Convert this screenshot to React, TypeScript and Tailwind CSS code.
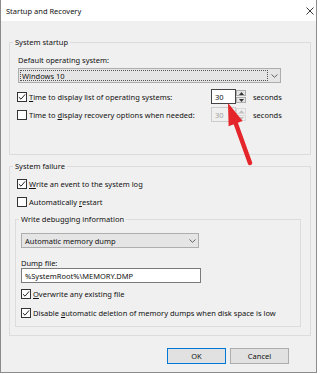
import React from 'react';

function Check({ checked }: { checked: boolean }) {
  return (
    <span className="w-[10px] h-[10px] shrink-0 border border-[#333] bg-white flex items-center justify-center">
      {checked && (
        <svg width="8" height="8" viewBox="0 0 8 8">
          <path d="M0.9 4.1 L3 6.2 L7.1 1.4" stroke="#222" strokeWidth="1" fill="none" />
        </svg>
      )}
    </span>
  );
}

function Chevron() {
  return (
    <svg width="7" height="4" viewBox="0 0 7 4" className="shrink-0">
      <path d="M0.5 0.5 L3.5 3.3 L6.5 0.5" stroke="#555" strokeWidth="0.9" fill="none" />
    </svg>
  );
}

function Spinner({ value, disabled }: { value: string; disabled?: boolean }) {
  return (
    <div className="flex h-[15px]">
      <div
        className={`w-[25px] h-full border pl-[3px] flex items-center ${
          disabled ? 'border-[#cccccc] bg-[#f0f0f0] text-[#a0a0a0]' : 'border-[#444] bg-white'
        }`}
      >
        {value}
      </div>
      <div className="w-[10px] h-full flex flex-col gap-[1px] py-[1px]">
        <div
          className={`flex-1 flex items-center justify-center border ${
            disabled ? 'border-[#d8d8d8]' : 'border-[#adadad] bg-[#e5e5e5]'
          }`}
        >
          <svg width="5" height="3" viewBox="0 0 5 3">
            <path d="M0 3 L2.5 0 L5 3 Z" fill={disabled ? '#c0c0c0' : '#333'} />
          </svg>
        </div>
        <div
          className={`flex-1 flex items-center justify-center border ${
            disabled ? 'border-[#d8d8d8]' : 'border-[#adadad] bg-[#e5e5e5]'
          }`}
        >
          <svg width="5" height="3" viewBox="0 0 5 3">
            <path d="M0 0 L2.5 3 L5 0 Z" fill={disabled ? '#c0c0c0' : '#333'} />
          </svg>
        </div>
      </div>
    </div>
  );
}

export default function App() {
  return (
    <div className="relative w-[320px] h-[374px] bg-white overflow-hidden font-['Noto_Sans',sans-serif] text-[7.5px] leading-[12px] text-[#111]">
      <div className="w-[317px] h-[373px] flex flex-col bg-[#f0f0f0] border-x border-b border-[#8c8c8c]">
        {/* Title bar */}
        <div className="h-[21px] shrink-0 bg-white flex items-center justify-between pl-[5px] pr-[2px]">
          <span>Startup and Recovery</span>
          <svg width="8" height="8" viewBox="0 0 8 8">
            <path d="M0.5 0.5 L7.5 7.5 M7.5 0.5 L0.5 7.5" stroke="#222" strokeWidth="0.9" />
          </svg>
        </div>

        {/* System startup */}
        <fieldset className="mt-[15px] ml-[8px] w-[302px] border border-[#dcdcdc]">
          <legend className="ml-[3px] px-[2px] leading-[12px]">System startup</legend>
          <div className="pl-[7px] pt-[6px] pb-[32px]">
            <div className="pl-[1px]">Default operating system:</div>
            <div className="ml-[1px] mt-[2px] w-[263px] h-[15px] border border-[#adadad] bg-[#e5e5e5] flex items-center pl-[1px]">
              <div className="flex-1 h-[11px] border border-dotted border-[#555] flex items-center pl-[1px]">
                Windows 10
              </div>
              <div className="w-[12px] flex justify-center">
                <Chevron />
              </div>
            </div>
            <div className="mt-[6px] h-[15px] flex items-center">
              <div className="w-[194px] flex items-center gap-[2px]">
                <Check checked />
                <span>
                  <u>T</u>ime to display list of operating systems:
                </span>
              </div>
              <Spinner value="30" />
              <span className="ml-[7px]">seconds</span>
            </div>
            <div className="mt-[3px] h-[15px] flex items-center">
              <div className="w-[194px] flex items-center gap-[2px]">
                <Check checked={false} />
                <span>
                  Time to <u>d</u>isplay recovery options when needed:
                </span>
              </div>
              <Spinner value="30" disabled />
              <span className="ml-[7px]">seconds</span>
            </div>
          </div>
        </fieldset>

        {/* System failure */}
        <fieldset className="mt-[5px] ml-[8px] w-[302px] border border-[#dcdcdc]">
          <legend className="ml-[3px] px-[2px] leading-[12px]">System failure</legend>
          <div className="pl-[5px] pt-[4px] pb-[8px]">
            <div className="pl-[2px] h-[15px] flex items-center gap-[2px]">
              <Check checked />
              <span>
                <u>W</u>rite an event to the system log
              </span>
            </div>
            <div className="pl-[2px] mt-[3px] h-[15px] flex items-center gap-[2px]">
              <Check checked={false} />
              <span>
                Automatically <u>r</u>estart
              </span>
            </div>

            <fieldset className="mt-[4px] w-[286px] border border-[#dcdcdc]">
              <legend className="ml-[3px] px-[2px] leading-[12px]">Write debugging information</legend>
              <div className="pl-[5px] pt-[8px] pb-[6px]">
                <div className="w-[178px] h-[15px] border border-[#adadad] bg-[#e5e5e5] flex items-center pl-[3px]">
                  <span className="flex-1">Automatic memory dump</span>
                  <div className="w-[12px] flex justify-center">
                    <Chevron />
                  </div>
                </div>
                <div className="mt-[10px] h-[10px] leading-[10px]">Dump file:</div>
                <div className="w-[180px] h-[15px] border border-[#7a7a7a] bg-white flex items-center pl-[3px]">
                  %SystemRoot%\MEMORY.DMP
                </div>
                <div className="mt-[3px] h-[15px] flex items-center gap-[2px]">
                  <Check checked />
                  <span>
                    <u>O</u>verwrite any existing file
                  </span>
                </div>
                <div className="mt-[4px] h-[15px] flex items-center gap-[2px]">
                  <Check checked />
                  <span>
                    Disable <u>a</u>utomatic deletion of memory dumps when disk space is low
                  </span>
                </div>
              </div>
            </fieldset>
          </div>
        </fieldset>

        {/* Buttons */}
        <div className="mt-[12px] ml-[166px] flex gap-[4px]">
          <button className="w-[59px] h-[16px] border border-[#0078d7] bg-[#e1e1e1] leading-[12px]">OK</button>
          <button className="w-[59px] h-[16px] border border-[#adadad] bg-[#e1e1e1] leading-[12px]">Cancel</button>
        </div>
      </div>

      {/* Red annotation arrow */}
      <svg className="absolute inset-0 pointer-events-none" width="320" height="374" viewBox="0 0 320 374">
        <line x1="235.6" y1="123" x2="250" y2="163" stroke="#e4262a" strokeWidth="4.5" strokeLinecap="round" />
        <polygon points="228,103 242.6,121.1 228.6,126.3" fill="#e4262a" />
      </svg>
    </div>
  );
}
